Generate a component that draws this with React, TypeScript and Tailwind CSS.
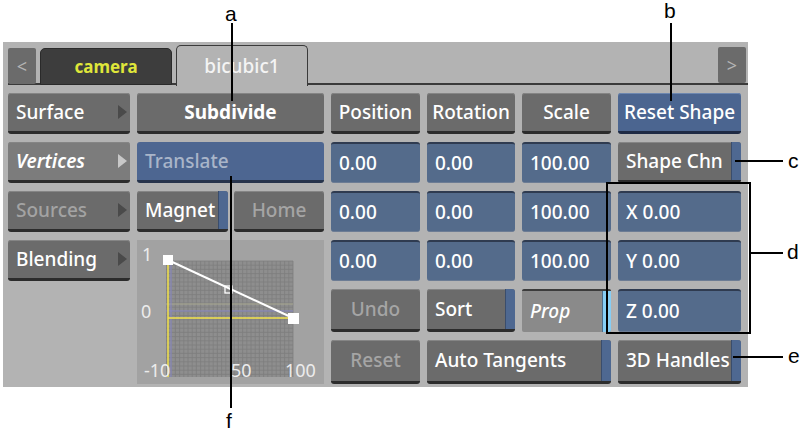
import React from 'react';

const font = "font-['Noto_Sans',sans-serif]";
const gray = 'relative flex items-center rounded-[3px] bg-[#6b6b6b] border-b-[3px] border-[#2c2c2c] shadow-[inset_0_1px_0_#858585]';
const blue = 'flex items-center rounded-[3px] bg-[#546b8b] border-t-2 border-[#2f3b50] border-b border-b-[#6c7c94] text-white text-[19px] font-medium pl-[8px]';

function Arrow({ light }: { light?: boolean }) {
  return (
    <svg width="9" height="14" viewBox="0 0 9 14" className="absolute right-[3px] top-[12px]">
      <path d="M0 0 L9 7 L0 14 Z" fill={light ? '#c8c8c8' : '#4a4a4a'} />
    </svg>
  );
}

function SideBtn({ label, italic, dim, active }: { label: string; italic?: boolean; dim?: boolean; active?: boolean }) {
  return (
    <div className={`${gray} ${active ? 'bg-[#7c7c7c]' : ''} pl-[8px] text-[19px] font-medium ${dim ? 'text-[#a3a3a3]' : 'text-white'} ${italic ? 'italic font-semibold' : ''}`}>
      {label}
      <Arrow light={active} />
    </div>
  );
}

function Btn({ label, center, dim, stripe, bold, className = '' }: { label: string; center?: boolean; dim?: boolean; stripe?: boolean; bold?: boolean; className?: string }) {
  return (
    <div className={`${gray} text-[19px] ${bold ? 'font-bold' : 'font-medium'} ${center ? 'justify-center' : 'pl-[8px]'} ${dim ? 'text-[#a5a5a5]' : 'text-white'} overflow-hidden whitespace-nowrap ${className}`}>
      {label}
      {stripe && <div className="absolute right-0 top-0 bottom-0 w-[10px] bg-[#4e6891] border-l border-[#3a4d6c]" />}
    </div>
  );
}

function Field({ v }: { v: string }) {
  return <div className={blue}>{v}</div>;
}

function Chart() {
  const vx: number[] = [];
  for (let x = 30; x <= 156; x += 4.2) vx.push(x);
  const hy: number[] = [];
  for (let y = 21; y <= 137; y += 4.2) hy.push(y);
  return (
    <div className="row-span-3 bg-[#a2a2a2] relative">
      <svg width="187" height="143" viewBox="0 0 187 143" className="block">
        <rect x="29" y="21" width="127" height="116" fill="#8e8e8e" />
        {vx.map((x, i) => <line key={'v' + i} x1={x} y1="21" x2={x} y2="137" stroke="#7d7d7d" strokeWidth="0.8" />)}
        {hy.map((y, i) => <line key={'h' + i} x1="29" y1={y} x2="156" y2={y} stroke="#7d7d7d" strokeWidth="0.8" />)}
        <line x1="29" y1="64" x2="156" y2="64" stroke="#a8a890" strokeWidth="1" />
        <line x1="29" y1="71" x2="156" y2="71" stroke="#8a8ac8" strokeWidth="1" />
        <line x1="34" y1="21" x2="34" y2="137" stroke="#8a8ac8" strokeWidth="1" />
        <line x1="31" y1="20" x2="31" y2="137" stroke="#f2e24a" strokeWidth="1.5" />
        <line x1="31" y1="78" x2="156" y2="78" stroke="#f2e24a" strokeWidth="1.5" />
        <line x1="31" y1="20" x2="156" y2="78" stroke="#ffffff" strokeWidth="2" />
        <rect x="26" y="15" width="10" height="10" fill="#ffffff" />
        <rect x="151" y="73" width="11" height="11" fill="#ffffff" />
        <rect x="88" y="46" width="7" height="7" fill="none" stroke="#ffffff" strokeWidth="1.3" />
        <g fill="#ececec" fontFamily="Noto Sans, sans-serif" fontSize="18">
          <text x="5" y="21">1</text>
          <text x="4" y="78">0</text>
          <text x="7" y="137">-10</text>
          <text x="94" y="137">50</text>
          <text x="148" y="137">100</text>
        </g>
      </svg>
    </div>
  );
}

export default function App() {
  return (
    <div className={`relative w-[808px] h-[436px] bg-white overflow-hidden ${font}`}>
      {/* panel */}
      <div className="ml-[3px] mt-[42px] w-[745px] h-[345px] bg-[#b3b3b3] flex flex-col">
        {/* tabs */}
        <div className="relative h-[44px] flex items-end pl-[5px] pr-[2px]">
          <div className="absolute left-[5px] right-0 bottom-[1px] h-[2px] bg-[#3a3a3a]" />
          <div className="relative mb-[2px] w-[28px] h-[36px] rounded-[2px] bg-[#6b6b6b] flex items-center justify-center text-[#b4b4b4] text-[18px]">&lt;</div>
          <div className="relative ml-[4px] mb-[1px] w-[132px] h-[37px] rounded-t-[5px] bg-[#3d3d3d] border border-[#2a2a2a] flex items-center justify-center text-[#dfe63a] text-[17px] font-bold">camera</div>
          <div className="relative ml-[4px] w-[132px] h-[41px] rounded-t-[5px] bg-[#b3b3b3] border-t border-x border-[#3a3a3a] flex items-center justify-center text-[#f4f4f4] text-[19px] font-medium">bicubic1</div>
          <div className="flex-1" />
          <div className="relative mb-[3px] w-[28px] h-[36px] rounded-[2px] bg-[#6b6b6b] flex items-center justify-center text-[#b4b4b4] text-[18px]">&gt;</div>
        </div>
        {/* controls */}
        <div className="mt-[7px] ml-[5px] grid grid-cols-[122px_187px_89px_88px_89px_123px] grid-rows-[41px_41px_41px_41px_43px_44px] gap-x-[7px] gap-y-[8px]">
          <SideBtn label="Surface" />
          <Btn label="Subdivide" center bold />
          <Btn label="Position" center />
          <Btn label="Rotation" center />
          <Btn label="Scale" center />
          <div className="flex items-center justify-center whitespace-nowrap rounded-[3px] bg-[#4b6590] border-b-[3px] border-[#1e2a44] shadow-[inset_0_1px_0_#6d87b0] text-white text-[19px] font-medium">Reset Shape</div>

          <SideBtn label="Vertices" italic active />
          <div className="flex items-center rounded-[3px] bg-[#4d6691] border-b-[3px] border-[#27344c] text-[#a9b5c9] text-[19px] font-medium pl-[8px]">Translate</div>
          <Field v="0.00" />
          <Field v="0.00" />
          <Field v="100.00" />
          <Btn label="Shape Chn" stripe />

          <SideBtn label="Sources" dim />
          <div className="grid grid-cols-[91px_1fr] gap-x-[6px]">
            <Btn label="Magnet" stripe />
            <Btn label="Home" center dim />
          </div>
          <Field v="0.00" />
          <Field v="0.00" />
          <Field v="100.00" />
          <Field v="X 0.00" />

          <SideBtn label="Blending" />
          <Chart />
          <Field v="0.00" />
          <Field v="0.00" />
          <Field v="100.00" />
          <Field v="Y 0.00" />

          <div />
          <Btn label="Undo" center dim />
          <Btn label="Sort" stripe />
          <div className="relative flex items-center rounded-[2px] bg-[#8a8a8a] border-t-2 border-[#3c3c3c] pl-[8px] text-white text-[19px] italic font-medium overflow-hidden">
            Prop
            <div className="absolute right-0 top-0 bottom-0 w-[9px] bg-[#86cdf4] border-l border-[#4c6c8a]" />
          </div>
          <Field v="Z 0.00" />

          <div />
          <Btn label="Reset" center dim />
          <Btn label="Auto Tangents" stripe className="col-span-2" />
          <Btn label="3D Handles" stripe />
        </div>
      </div>

      {/* callouts */}
      <div className="absolute inset-0 font-['Liberation_Sans',sans-serif] text-black text-[21px] leading-none pointer-events-none">
        <div className="absolute left-[225px] top-[3px]">a</div>
        <div className="absolute left-[231px] top-[23px] w-[2px] h-[78px] bg-black" />
        <div className="absolute left-[664px] top-[0px]">b</div>
        <div className="absolute left-[670px] top-[23px] w-[2px] h-[78px] bg-black" />
        <div className="absolute left-[735px] top-[160px] w-[48px] h-[2px] bg-black" />
        <div className="absolute left-[788px] top-[150px]">c</div>
        <div className="absolute left-[606px] top-[182px] w-[145px] h-[152px] border-2 border-black" />
        <div className="absolute left-[750px] top-[252px] w-[33px] h-[2px] bg-black" />
        <div className="absolute left-[787px] top-[241px]">d</div>
        <div className="absolute left-[733px] top-[356px] w-[50px] h-[2px] bg-black" />
        <div className="absolute left-[788px] top-[345px]">e</div>
        <div className="absolute left-[230px] top-[176px] w-[2px] h-[232px] bg-black" />
        <div className="absolute left-[226px] top-[410px]">f</div>
      </div>
    </div>
  );
}
